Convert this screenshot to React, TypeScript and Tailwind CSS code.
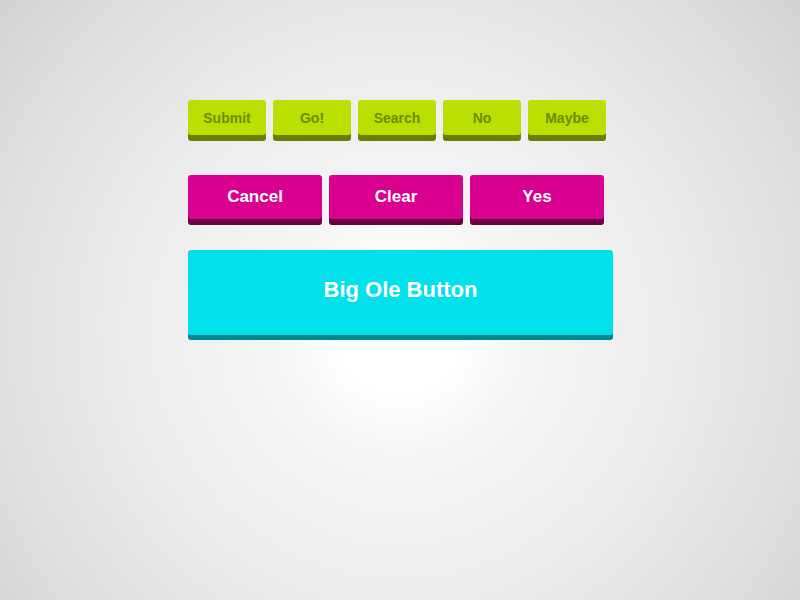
import React from "react";

const green = ["Submit", "Go!", "Search", "No", "Maybe"];
const pink = ["Cancel", "Clear", "Yes"];

export default function App() {
  return (
    <div
      className="w-full h-[600px] overflow-hidden pt-[100px] pl-[188px] bg-[radial-gradient(circle_at_400px_330px,#ffffff_0px,#ffffff_60px,#f5f5f5_130px,#ececec_270px,#dedede_420px,#d0d0d0_540px)]"
      style={{ fontFamily: '"Liberation Sans", Arial, sans-serif' }}
    >
      <div className="flex gap-[7px]">
        {green.map((t) => (
          <button
            key={t}
            className="w-[78px] h-[35px] rounded-[3px] bg-[#b9e000] text-[#6b8b00] text-[14px] font-bold shadow-[0_6px_0_#6a7f00] flex items-center justify-center pt-[1px]"
          >
            {t}
          </button>
        ))}
      </div>
      <div className="flex gap-[7px] mt-[40px]">
        {pink.map((t) => (
          <button
            key={t}
            className="w-[134px] h-[44px] rounded-[3px] bg-[#d9008f] text-white text-[17px] font-bold shadow-[0_6px_0_#6b0044] flex items-center justify-center"
          >
            {t}
          </button>
        ))}
      </div>
      <div className="mt-[31px]">
        <button className="w-[425px] h-[85px] rounded-[3px] bg-[#00e1ec] text-white text-[22px] font-bold shadow-[0_5px_0_#008a90] flex items-center justify-center pb-[6px]">
          Big Ole Button
        </button>
      </div>
    </div>
  );
}
